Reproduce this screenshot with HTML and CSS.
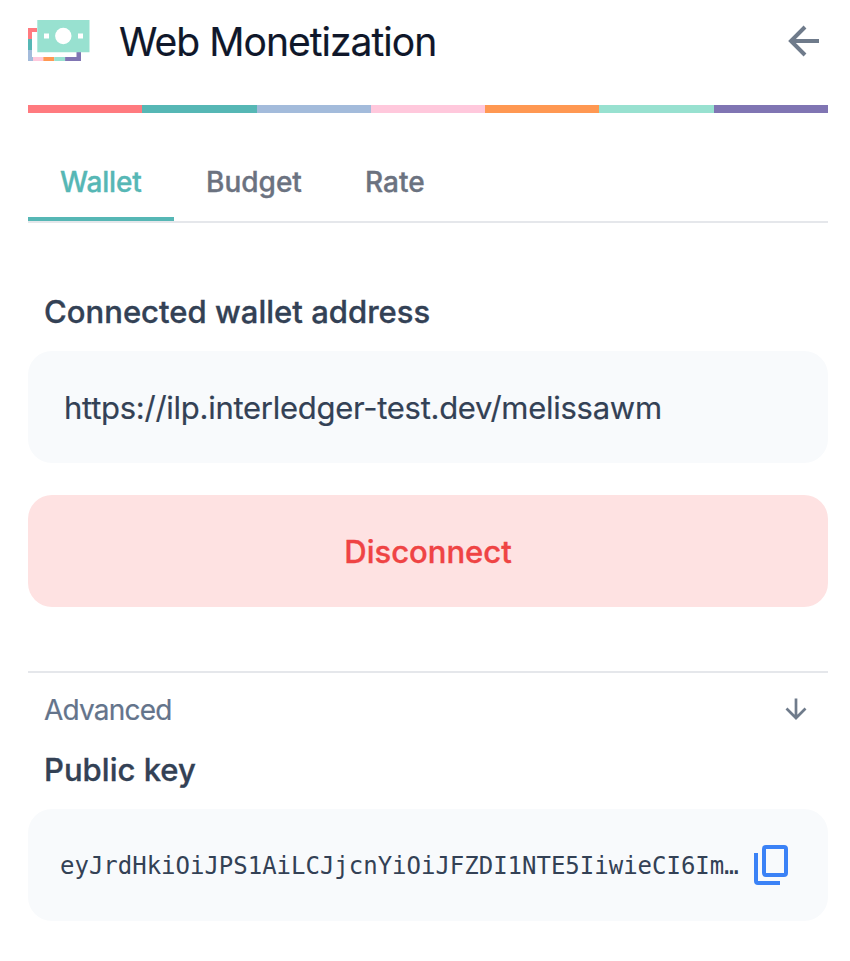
FILE: index.html
```html
<!DOCTYPE html>
<html lang="en">
<head>
<meta charset="utf-8">
<title>Web Monetization</title>
<link rel="stylesheet" href="styles.css">
</head>
<body>
<main class="popup">
  <header class="header">
    <svg class="logo" width="62" height="42" viewBox="0 0 62 42" aria-hidden="true">
      <path fill="#ff7a7f" d="M0 8h9v4H4v7H0z"/>
      <path fill="#56b7b5" d="M0 19h4v11H0z"/>
      <path fill="#a3bbdb" d="M0 30h4v7h1v4H0z"/>
      <path fill="#ffc8dc" d="M5 37h10.3v4H5z"/>
      <path fill="#ff9852" d="M15.300 37h10.900v4H15.300z"/>
      <path fill="#98e1d0" d="M26.200 37h10.900v4H26.200z"/>
      <path fill="#8075b3" d="M37.100 37h11.400v-5H53v9H37.100z"/>
      <path fill="#98e1d0" d="M9.300 0h52.200v32.300H9.300z"/>
      <circle cx="35.300" cy="16" r="8.200" fill="#fff"/>
      <path fill="#fff" d="M16 13.500h5v5h-5zM50 13.500h5v5h-5z"/>
    </svg>
    <h1 class="title">Web Monetization</h1>
    <svg class="back" width="32" height="32" viewBox="0 0 32 32" aria-hidden="true">
      <path d="M31 16H3M17 2 3 16l14 14"/>
    </svg>
  </header>
  <div class="stripes"><i></i><i></i><i></i><i></i><i></i><i></i><i></i></div>
  <nav class="tabs">
    <span class="tab active"><span class="wallet">Wallet</span></span>
    <span class="tab"><span class="budget">Budget</span></span>
    <span class="tab"><span class="rate">Rate</span></span>
  </nav>
  <h2 class="label">Connected wallet address</h2>
  <div class="field"><span class="url">https://ilp.interledger-test.dev/melissawm</span></div>
  <button class="disconnect" type="button">Disconnect</button>
  <section class="advanced">
    <div class="summary">
      <span class="advanced-text">Advanced</span>
      <svg class="down" width="22" height="22" viewBox="0 0 22 22" aria-hidden="true">
        <path d="M11 .500V20M1.500 10.500 11 20l9.500-9.500"/>
      </svg>
    </div>
    <h2 class="label key-label">Public key</h2>
    <div class="field key-field">
      <code class="key">eyJrdHkiOiJPS1AiLCJjcnYiOiJFZDI1NTE5IiwieCI6Im…</code>
      <svg class="copy" width="34" height="40" viewBox="0 0 34 40" aria-hidden="true">
        <rect x="10" y="2" width="22" height="28" rx="2"/>
        <path d="M2 8v28a2 2 0 0 0 2 2h22"/>
      </svg>
    </div>
  </section>
</main>
</body>
</html>
```

FILE: styles.css
```css
* { box-sizing: border-box; }
body {
  margin: 0;
  background: #fff;
  color: #334155;
  font-family: Inter, "Liberation Sans", sans-serif;
}
.popup { width: 800px; margin-left: 28px; padding-top: 18px; }
h1, h2 { margin: 0; font-weight: 500; white-space: nowrap; }
.label, .tab, .disconnect { -webkit-text-stroke: 0.35px currentColor; }
.title, .url, .advanced-text { -webkit-text-stroke: 0.2px currentColor; }
.header { display: flex; align-items: center; height: 48px; }
.logo { margin-top: -3px; }
.title {
  margin-left: 29px;
  color: #0f172a;
  font-size: 39px;
  font-weight: 400;
  line-height: 48px;
  letter-spacing: -0.96px;
}
.back { margin: -2px 8px 0 auto; }
.back path, .down path { fill: none; stroke: #6f7b8b; stroke-width: 4; }
.down path { stroke-width: 2.700; }
.stripes { display: flex; height: 8px; margin-top: 39px; }
.stripes i { flex: 1; background: #ff7a7f; }
.stripes i:nth-child(2) { background: #56b7b5; }
.stripes i:nth-child(3) { background: #a3bbdb; }
.stripes i:nth-child(4) { background: #ffc8dc; }
.stripes i:nth-child(5) { background: #ff9852; }
.stripes i:nth-child(6) { background: #98e1d0; }
.stripes i:nth-child(7) { background: #8075b3; }
.tabs {
  display: flex;
  height: 78px;
  margin-top: 32px;
  border-bottom: 2px solid #e5e7eb;
}
.tab {
  height: 76px;
  padding: 18px 32px 0;
  color: #6b7280;
  font-size: 28px;
  font-weight: 500;
  line-height: 38px;
  white-space: nowrap;
}
.tab span { display: block; }
.active { color: #56b7b5; border-bottom: 4px solid #56b7b5; }
.wallet { width: 82px; letter-spacing: -0.15px; }
.budget { width: 95px; }
.label {
  margin: 70px 0 0 16px;
  font-size: 31px;
  line-height: 38px;
  letter-spacing: 0.03px;
}
.field {
  display: flex;
  align-items: center;
  height: 112px;
  margin-top: 20px;
  padding: 0 36px;
  border-radius: 24px;
  background: #f8fafc;
}
.url { font-size: 31px; letter-spacing: -0.27px; white-space: nowrap; }
.disconnect {
  display: block;
  width: 100%;
  height: 112px;
  margin-top: 32px;
  padding: 2px 0 0;
  border: 0;
  border-radius: 24px;
  background: #fee2e2;
  color: #ef4444;
  font: 500 31px/40px Inter, "Liberation Sans", sans-serif;
}
.advanced { margin-top: 64px; border-top: 2px solid #e5e7eb; }
.summary {
  display: flex;
  justify-content: space-between;
  height: 56px;
  padding: 17px 21px 0 16px;
  color: #64748b;
  font-size: 28px;
  line-height: 40px;
}
.advanced-text { letter-spacing: -0.78px; }
.down { margin-top: 8px; }
.key-label { margin-top: 22px; }
.key-field { padding: 0 40px 0 32px; justify-content: space-between; }
.key { padding-top: 2px; font: 24px/32px "DejaVu Sans Mono", monospace; letter-spacing: -0.01px; }
.copy { fill: none; stroke: #3b82f6; stroke-width: 4; }
```
